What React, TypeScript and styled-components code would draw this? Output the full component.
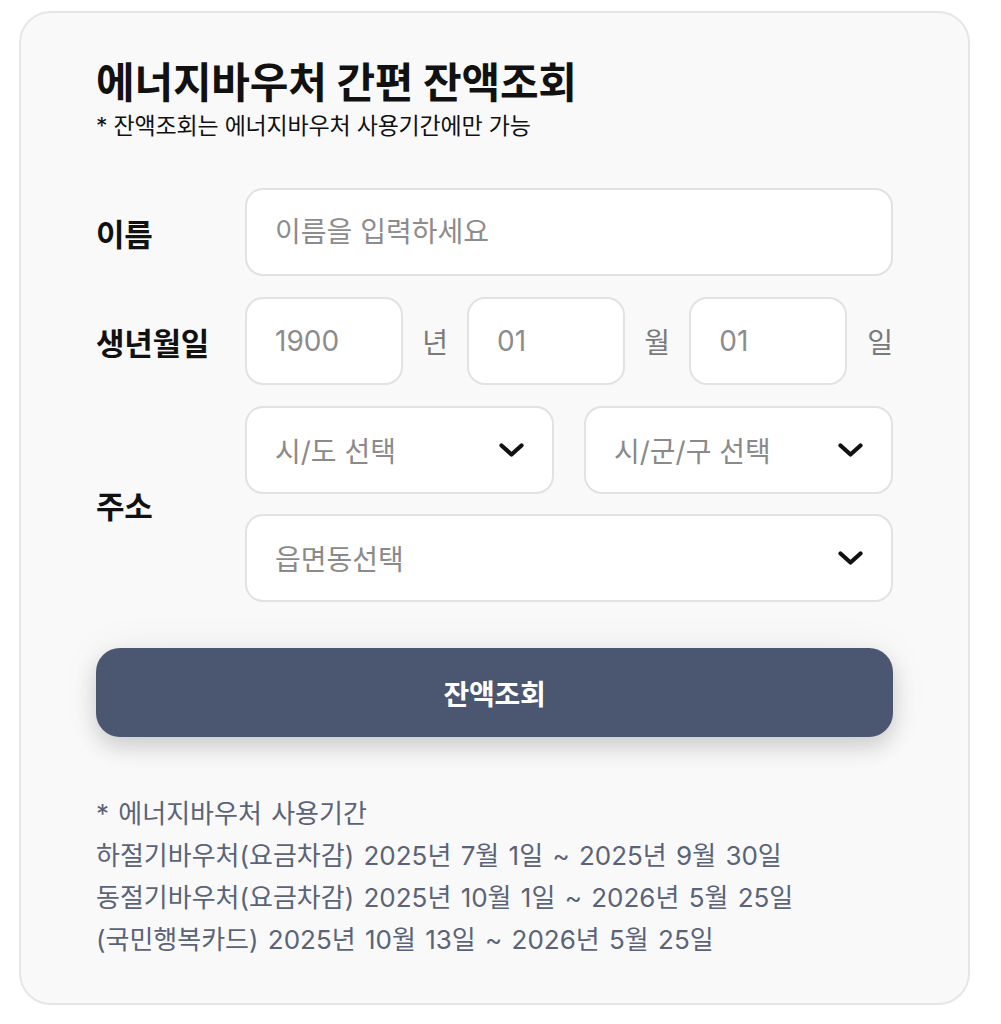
import React from 'react';
import styled, { createGlobalStyle } from 'styled-components';

const FONT = `Inter, 'Noto Sans CJK KR', 'Noto Sans', sans-serif`;

const GlobalStyle = createGlobalStyle`
  html, body {
    margin: 0;
    padding: 0;
    background: #ffffff;
  }
  body {
    font-family: ${FONT};
    color: #111111;
  }
  * {
    box-sizing: border-box;
  }
`;

const Page = styled.div`
  padding: 11px 31px 19px 19px;
`;

const Card = styled.section`
  background: #f9f9f9;
  border: 2px solid #e6e6e6;
  border-radius: 32px;
  padding: 45px 75px 42px 75px;
`;

const Title = styled.h1`
  margin: 0;
  font-size: 42px;
  line-height: 50px;
  font-weight: 700;
  letter-spacing: -0.2px;
  color: #111111;
`;

const Subtitle = styled.p`
  margin: 3px 0 0;
  font-size: 23px;
  line-height: 30px;
  letter-spacing: -0.2px;
  color: #111111;
`;

const Form = styled.form`
  margin-top: 47px;
  display: grid;
  grid-template-columns: 149px 1fr;
  row-gap: 21px;
  align-items: center;
`;

const Label = styled.label`
  font-size: 31px;
  font-weight: 700;
  letter-spacing: -0.3px;
  color: #111111;
`;

const fieldBase = `
  height: 88px;
  background: #ffffff;
  border: 2px solid #e2e2e2;
  border-radius: 18px;
  font-family: ${FONT};
  font-size: 28px;
  color: #222222;
  outline: none;
`;

const TextInput = styled.input`
  ${fieldBase}
  width: 100%;
  padding: 0 28px;
  &::placeholder {
    color: #8c8c8c;
  }
`;

const DateRow = styled.div`
  display: grid;
  grid-template-columns: 158px 1fr 158px 1fr 158px auto;
  align-items: center;
`;

const Unit = styled.span`
  font-size: 28px;
  color: #7a7a7a;
  text-align: center;
`;

const LastUnit = styled(Unit)`
  padding-left: 20px;
`;

const AddressGroup = styled.div`
  display: grid;
  grid-template-columns: 1fr 1fr;
  column-gap: 30px;
  row-gap: 20px;
`;

const Select = styled.div<{ $wide?: boolean }>`
  ${fieldBase}
  grid-column: ${({ $wide }) => ($wide ? '1 / span 2' : 'auto')};
  display: flex;
  align-items: center;
  justify-content: space-between;
  padding: 0 28px 0 28px;
  cursor: pointer;
`;

const SelectText = styled.span`
  color: #8a8a8a;
`;

const SubmitButton = styled.button`
  margin-top: 46px;
  width: 100%;
  height: 89px;
  border: none;
  border-radius: 24px;
  background: #4b5670;
  color: #ffffff;
  font-family: ${FONT};
  font-size: 28px;
  font-weight: 700;
  letter-spacing: -0.3px;
  box-shadow: 0 10px 22px rgba(0, 0, 0, 0.16), 0 0 44px rgba(0, 0, 0, 0.05);
  cursor: pointer;
`;

const Notice = styled.div`
  margin-top: 56px;
  font-size: 26px;
  line-height: 42px;
  letter-spacing: 0;
  word-spacing: 2px;
  color: #5a6378;
`;

const NoticeLine = styled.div``;

const Chevron: React.FC = () => (
  <svg width="25" height="15" viewBox="0 0 25 15" fill="none">
    <path d="M2.5 2.5 L12.5 11.5 L22.5 2.5" stroke="#111111" strokeWidth="4.2" strokeLinecap="round" strokeLinejoin="round" />
  </svg>
);

const notices = [
  '* 에너지바우처 사용기간',
  '하절기바우처(요금차감) 2025년 7월 1일 ~ 2025년 9월 30일',
  '동절기바우처(요금차감) 2025년 10월 1일 ~ 2026년 5월 25일',
  '(국민행복카드) 2025년 10월 13일 ~ 2026년 5월 25일',
];

const App: React.FC = () => {
  return (
    <Page>
      <GlobalStyle />
      <Card>
        <Title>에너지바우처 간편 잔액조회</Title>
        <Subtitle>* 잔액조회는 에너지바우처 사용기간에만 가능</Subtitle>

        <Form onSubmit={(e) => e.preventDefault()}>
          <Label htmlFor="name">이름</Label>
          <TextInput id="name" placeholder="이름을 입력하세요" />

          <Label htmlFor="year">생년월일</Label>
          <DateRow>
            <TextInput id="year" placeholder="1900" />
            <Unit>년</Unit>
            <TextInput placeholder="01" />
            <Unit>월</Unit>
            <TextInput placeholder="01" />
            <LastUnit>일</LastUnit>
          </DateRow>

          <Label>주소</Label>
          <AddressGroup>
            <Select>
              <SelectText>시/도 선택</SelectText>
              <Chevron />
            </Select>
            <Select>
              <SelectText>시/군/구 선택</SelectText>
              <Chevron />
            </Select>
            <Select $wide>
              <SelectText>읍면동선택</SelectText>
              <Chevron />
            </Select>
          </AddressGroup>
        </Form>

        <SubmitButton type="button">잔액조회</SubmitButton>

        <Notice>
          {notices.map((line) => (
            <NoticeLine key={line}>{line}</NoticeLine>
          ))}
        </Notice>
      </Card>
    </Page>
  );
};

export default App;
